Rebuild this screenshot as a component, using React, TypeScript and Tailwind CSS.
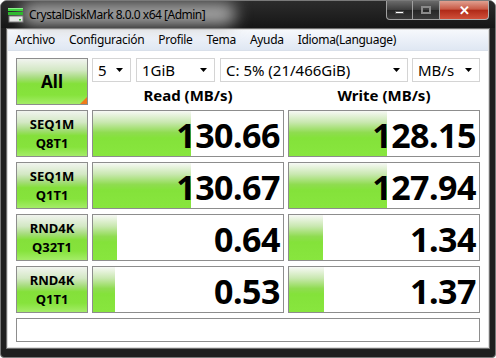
import React from "react";

const font = { fontFamily: "'Noto Sans', 'Open Sans', sans-serif" };

const rows = [
  { a: "SEQ1M", b: "Q8T1", read: "130.66", rw: 98, write: "128.15", ww: 98 },
  { a: "SEQ1M", b: "Q1T1", read: "130.67", rw: 98, write: "127.94", ww: 98 },
  { a: "RND4K", b: "Q32T1", read: "0.64", rw: 24, write: "1.34", ww: 34 },
  { a: "RND4K", b: "Q1T1", read: "0.53", rw: 22, write: "1.37", ww: 35 },
];

const green =
  "bg-[linear-gradient(to_bottom,#f1f4ef_0%,#d3e8c4_25%,#a6dc7c_42%,#84e03a_55%,#86e33c_80%,#a4ec68_100%)]";
const barGreen =
  "bg-[linear-gradient(to_bottom,#f7f9f5_0%,#c9e8b0_25%,#8fdc50_48%,#84e23a_60%,#88e63e_100%)]";

const Arrow = () => (
  <svg width="8" height="5" viewBox="0 0 8 5" className="shrink-0">
    <path d="M0 0 H7 L3.5 4 Z" fill="#000" />
  </svg>
);

const Combo = ({ label, w }: { label: string; w: string }) => (
  <div className={`${w} h-[24px] border border-[#d4d4d4] bg-white flex items-center pl-[5px] pr-[6px] gap-1`}>
    <span className="flex-1 text-[15px] text-black leading-none whitespace-nowrap">{label}</span>
    <Arrow />
  </div>
);

const Value = ({ v, w }: { v: string; w: number }) => (
  <div className="relative h-[47px] border border-[#8d8d8d] bg-white flex items-center justify-end pr-[3px] overflow-hidden">
    <div className={`absolute left-0 top-0 bottom-0 ${barGreen}`} style={{ width: w }} />
    <span className="relative text-[34px] font-bold text-black leading-none mt-[3px] tracking-[-0.5px]">{v}</span>
  </div>
);

export default function App() {
  return (
    <div
      className="w-[496px] h-[358px] bg-[#1f1f1f] border border-[#7a7a7a] rounded-t-[7px] rounded-b-[4px] flex flex-col overflow-hidden"
      style={font}
    >
      <div className="h-[27px] flex items-start relative bg-[linear-gradient(to_bottom,#2c2c2c,#161616)]">
        <div className="absolute left-[20px] top-[2px] w-[215px] h-[22px] rounded-full bg-[#a8a8a8] blur-[8px]" />
        <svg width="16" height="16" viewBox="0 0 16 16" className="relative ml-[7px] mt-[6px]">
          <rect x="0" y="1" width="15" height="3" fill="#3ed43e" />
          <rect x="0" y="1" width="15" height="1" fill="#8cf08c" />
          <rect x="0" y="5" width="15" height="3" fill="#2fb82f" />
          <rect x="1" y="9" width="14" height="6" fill="#e6e6e6" stroke="#7a7a7a" strokeWidth="1" />
          <rect x="11" y="12" width="2" height="1.5" fill="#30c030" />
        </svg>
        <span className="relative ml-[5px] mt-[6px] text-[12px] leading-[15px] text-black whitespace-nowrap tracking-[-0.5px]">
          CrystalDiskMark 8.0.0 x64 [Admin]
        </span>
        <div className="ml-auto mr-[6px] flex">
          <div className="w-[27px] h-[19px] border border-[#a0a0a0] border-t-0 rounded-bl-[4px] bg-[linear-gradient(to_bottom,#6a6a6a,#3c3c3c_50%,#262626_51%,#3a3a3a)] flex items-center justify-center">
            <div className="w-[9px] h-[3px] bg-white mt-[5px] border border-[#555]" />
          </div>
          <div className="w-[27px] h-[19px] border border-l-0 border-[#a0a0a0] border-t-0 bg-[linear-gradient(to_bottom,#6a6a6a,#3c3c3c_50%,#262626_51%,#3a3a3a)] flex items-center justify-center">
            <div className="w-[10px] h-[8px] border-2 border-[#8a8a8a]" />
          </div>
          <div className="w-[49px] h-[19px] border border-l-0 border-[#b0b0b0] border-t-0 rounded-br-[4px] bg-[linear-gradient(to_bottom,#e0a090,#c85a46_45%,#b02a18_52%,#d0503a)] flex items-center justify-center">
            <span className="text-white text-[13px] font-bold leading-none">✕</span>
          </div>
        </div>
      </div>

      <div className="mx-[5px] border border-[#6e6e6e]">
        <div className="border border-[#dcdcdc] bg-white">
          <div className="h-[21px] flex items-center pl-[7px] gap-[14px] text-[12px] tracking-[-0.3px] text-black bg-[linear-gradient(to_bottom,#f6f8fc,#dfe7f3)] border-b border-[#d9e0ea]">
            <span>Archivo</span>
            <span>Configuración</span>
            <span>Profile</span>
            <span>Tema</span>
            <span>Ayuda</span>
            <span>Idioma(Language)</span>
          </div>

          <div className="h-[296px] px-[7px] pt-[7px] pl-[8px] grid grid-cols-[72px_192px_192px] gap-x-[4px] gap-y-[5px] auto-rows-[47px] content-start">
            <div className={`relative border border-[#8d8d8d] ${green} flex items-center justify-center`}>
              <span className="text-[17px] font-bold text-black">All</span>
              <div className="absolute right-0 bottom-0 w-[7px] h-[7px] bg-[#f07a1a] [clip-path:polygon(100%_0,100%_100%,0_100%)]" />
            </div>
            <div className="col-span-2 flex flex-col">
              <div className="flex gap-[5px]">
                <Combo label="5" w="w-[39px]" />
                <Combo label="1GiB" w="w-[79px]" />
                <Combo label="C: 5% (21/466GiB)" w="w-[188px]" />
                <div className="w-[68px] ml-[-1px]">
                  <Combo label="MB/s" w="w-[68px]" />
                </div>
              </div>
              <div className="flex-1 grid grid-cols-2 gap-x-[4px] items-center text-[15px] font-bold text-black text-center">
                <span className="mt-[2px]">Read (MB/s)</span>
                <span className="mt-[2px]">Write (MB/s)</span>
              </div>
            </div>

            {rows.map((r, i) => (
              <React.Fragment key={i}>
                <div className={`border border-[#8d8d8d] ${green} flex flex-col items-center justify-center text-[13px] font-bold text-black leading-[19px]`}>
                  <span>{r.a}</span>
                  <span>{r.b}</span>
                </div>
                <Value v={r.read} w={r.rw} />
                <Value v={r.write} w={r.ww} />
              </React.Fragment>
            ))}

            <div className="col-span-3 h-[24px] border border-[#8d8d8d] bg-white" />
          </div>
        </div>
      </div>
    </div>
  );
}
